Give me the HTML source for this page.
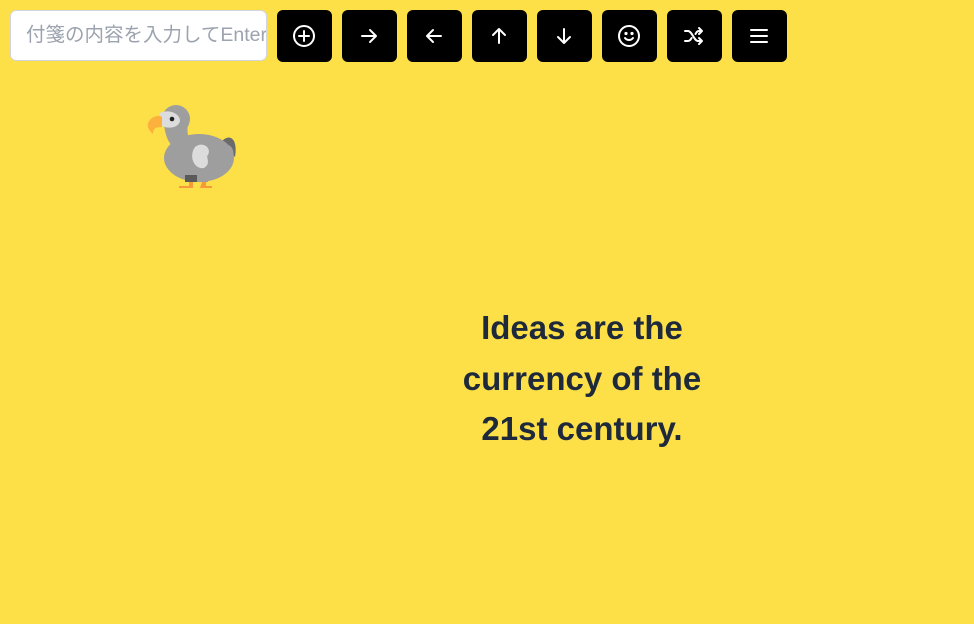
<!DOCTYPE html>
<html><head><meta charset="utf-8"><style>
html,body{margin:0;padding:0;width:974px;height:624px;overflow:hidden;background:#fde047;font-family:"Liberation Sans","Noto Sans CJK JP",sans-serif}
.in{position:absolute;left:10px;top:10px;width:257px;height:51px;box-sizing:border-box;background:#fff;border:1px solid #d1d5db;border-radius:6px;padding-left:15px;font-size:19.5px;line-height:49px;color:#9ca3af;white-space:nowrap;overflow:hidden}
.b{position:absolute;top:10px;width:55px;height:52px;background:#000;border-radius:6px}
.b svg{position:absolute;left:15px;top:14px}
.t{position:absolute;left:382px;width:400px;top:303px;text-align:center;font-weight:bold;font-size:33px;line-height:50.5px;color:#1e293b}
</style></head><body>
<div class="in">付箋の内容を入力してEnter</div>
<div class="b" style="left:277px"><svg width="24" height="24" viewBox="0 0 24 24" fill="none" stroke="#fff" stroke-width="2" stroke-linecap="round"><circle cx="12" cy="12" r="10"/><path d="M12 7v10M7 12h10"/></svg></div>
<div class="b" style="left:342px"><svg width="24" height="24" viewBox="0 0 24 24" fill="none" stroke="#fff" stroke-width="2" stroke-linecap="round" stroke-linejoin="round"><path d="M5 12h14M13 6l6 6-6 6"/></svg></div>
<div class="b" style="left:407px"><svg width="24" height="24" viewBox="0 0 24 24" fill="none" stroke="#fff" stroke-width="2" stroke-linecap="round" stroke-linejoin="round"><path d="M19 12H5M11 6l-6 6 6 6"/></svg></div>
<div class="b" style="left:472px"><svg width="24" height="24" viewBox="0 0 24 24" fill="none" stroke="#fff" stroke-width="2" stroke-linecap="round" stroke-linejoin="round"><path d="M12 19V5M6 11l6-6 6 6"/></svg></div>
<div class="b" style="left:537px"><svg width="24" height="24" viewBox="0 0 24 24" fill="none" stroke="#fff" stroke-width="2" stroke-linecap="round" stroke-linejoin="round"><path d="M12 5v14M6 13l6 6 6-6"/></svg></div>
<div class="b" style="left:602px"><svg width="24" height="24" viewBox="0 0 24 24" fill="none" stroke="#fff" stroke-width="2" stroke-linecap="round"><circle cx="12" cy="12" r="10"/><path d="M8 14s1.5 2 4 2 4-2 4-2"/><circle cx="9" cy="9.5" r=".6" fill="#fff"/><circle cx="15" cy="9.5" r=".6" fill="#fff"/></svg></div>
<div class="b" style="left:667px"><svg width="24" height="24" viewBox="0 0 24 24" fill="none" stroke="#fff" stroke-width="2" stroke-linecap="round" stroke-linejoin="round"><path d="M3 7h3c4 0 6 10 10 10h4M3 17h3c1.5 0 2.7-1.3 3.6-3M13.5 10c.9-1.7 1.5-3 3.5-3h3M17 4l3 3-3 3M17 14l3 3-3 3"/></svg></div>
<div class="b" style="left:732px"><svg width="24" height="24" viewBox="0 0 24 24" fill="none" stroke="#fff" stroke-width="2" stroke-linecap="round"><path d="M4 6h16M4 12h16M4 18h16"/></svg></div>
<svg style="position:absolute;left:140px;top:95px" width="105" height="105" viewBox="0 0 105 105">
<path d="M82 46 C90 38 98 44 95 62 C90 58 86 54 82 50Z" fill="#6b6b6b"/>
<ellipse cx="36" cy="24" rx="14" ry="14" fill="#9e9e9e"/>
<path d="M24 30 C26 44 30 52 40 56 L50 44 C46 40 48 30 48 22Z" fill="#9e9e9e"/>
<ellipse cx="59" cy="63" rx="35" ry="24" fill="#9e9e9e"/>
<path d="M84 50 C92 48 96 56 92 68 C88 62 86 60 84 58Z" fill="#9e9e9e"/>
<path d="M20 18 C28 14 40 18 40 26 C38 34 26 34 20 30Z" fill="#dcdcdc"/>
<circle cx="32" cy="24" r="2.3" fill="#222"/>
<path d="M8 28 C12 20 20 20 22 22 L22 32 C16 32 13 33 13 39 C9 36 7 32 8 28Z" fill="#fbb13c"/>
<path d="M55 52 C62 46 72 52 68 60 C65 62 72 68 64 73 C55 75 48 62 55 52Z" fill="#dcdcdc"/>
<rect x="45" y="80" width="12" height="7" fill="#5a5a5a"/>
<rect x="58" y="80" width="10" height="7" fill="#9e9e9e"/>
<path d="M49 87h4v6h-14v-2h10z" fill="#f79a3b"/>
<path d="M62 87h4v4h6v2h-12z" fill="#f79a3b"/>
</svg>
<div class="t">Ideas are the<br>currency of the<br>21st century.</div>
</body></html>
